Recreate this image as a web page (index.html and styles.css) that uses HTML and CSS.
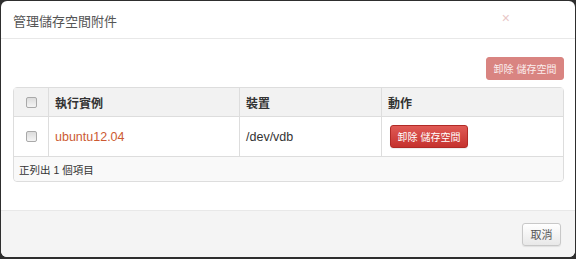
FILE: index.html
```html
<!DOCTYPE html>
<html lang="zh-Hant">
<head>
  <meta charset="utf-8">
  <title>管理儲存空間附件</title>
  <link rel="stylesheet" href="styles.css">
</head>
<body>
  <div class="modal">
    <div class="modal-header">
      <h3>管理儲存空間附件</h3>
      <span class="close">&times;</span>
    </div>
    <div class="modal-body">
      <div class="table-actions">
        <button class="btn btn-danger disabled">卸除 儲存空間</button>
      </div>
      <table class="table">
        <thead>
          <tr>
            <th class="col-check"><span class="checkbox"></span></th>
            <th class="col-instance">執行實例</th>
            <th class="col-device">裝置</th>
            <th>動作</th>
          </tr>
        </thead>
        <tbody>
          <tr>
            <td class="col-check"><span class="checkbox"></span></td>
            <td><a href="#">ubuntu12.04</a></td>
            <td>/dev/vdb</td>
            <td><button class="btn btn-danger btn-row">卸除 儲存空間</button></td>
          </tr>
        </tbody>
        <tfoot>
          <tr>
            <td colspan="4">正列出 1 個項目</td>
          </tr>
        </tfoot>
      </table>
    </div>
    <div class="modal-footer">
      <button class="btn">取消</button>
    </div>
  </div>
</body>
</html>
```

FILE: styles.css
```css
html, body {
  height: 100%;
}
body {
  margin: 0;
  background-color: #2e2e2e;
  font-family: 'Liberation Sans', 'Noto Sans CJK TC', sans-serif;
  color: #333;
  box-sizing: border-box;
  padding: 1px 1px 2px 1px;
}
.modal {
  height: 100%;
  display: flex;
  flex-direction: column;
  background-color: #ffffff;
  border-radius: 6px;
  overflow: hidden;
}
.modal-header {
  display: flex;
  justify-content: space-between;
  align-items: center;
  height: 37px;
  padding: 0 12px;
  border-bottom: 1px solid #e8e8e8;
}
.modal-header h3 {
  margin: 0;
  font-size: 13px;
  font-weight: normal;
  color: #555;
  padding-top: 1px;
}
.close {
  font-size: 14px;
  color: #e8c6c6;
  margin-right: 53px;
  margin-top: -4px;
}
.modal-body {
  flex: 1;
  padding: 18px 11px 0 12px;
}
.table-actions {
  display: flex;
  justify-content: flex-end;
  margin-bottom: 7px;
}
.btn {
  font-family: 'Liberation Sans', 'Noto Sans CJK TC', sans-serif;
  font-size: 10px;
  height: 23px;
  padding: 0;
  white-space: nowrap;
  border: 1px solid #c8c8c8;
  border-radius: 3px;
  color: #555;
  background: linear-gradient(#ffffff, #e8e8e8);
  box-shadow: 0 1px 1px rgba(0, 0, 0, 0.08);
}
.btn-danger {
  color: #ffffff;
  border-color: #b02a26;
  background: linear-gradient(#e05a55, #c5322e);
  width: 78px;
}
.btn-danger.disabled {
  border-color: #d98481;
  background: #d98481;
  box-shadow: none;
  color: #fbeeee;
}
.table {
  width: 100%;
  border-collapse: separate;
  border-spacing: 0;
  border: 1px solid #dddddd;
  border-radius: 4px;
  font-size: 12.5px;
}
.table th, .table td {
  text-align: left;
  border-left: 1px solid #dddddd;
  padding: 0 6px;
}
.table th:first-child, .table td:first-child {
  border-left: none;
}
.table thead th {
  background-color: #f2f2f2;
  font-size: 12px;
  height: 28px;
  border-bottom: 1px solid #dddddd;
}
.table tbody td {
  height: 39px;
  border-bottom: 1px solid #dddddd;
}
.table tfoot td {
  background-color: #f9f9f9;
  font-size: 10.5px;
  height: 24px;
  padding-left: 5px;
  border-radius: 0 0 4px 4px;
}
.col-check {
  width: 22px;
  text-align: center !important;
}
.col-instance {
  width: 178px;
}
.col-device {
  width: 129px;
}
.checkbox {
  display: block;
  width: 9px;
  height: 9px;
  margin: 0 auto;
  border: 1px solid #a9a9a9;
  border-radius: 2px;
  background: linear-gradient(#dcdcdc, #f4f4f4);
}
.table a {
  color: #cc5a32;
  text-decoration: none;
}
.btn-row {
  margin-left: 2px;
}
.modal-footer {
  display: flex;
  justify-content: flex-end;
  align-items: center;
  height: 46px;
  padding: 0 14px;
  border-top: 1px solid #e8e8e8;
  background-color: #f4f4f4;
}
.modal-footer .btn {
  width: 39px;
  font-size: 11px;
}
```
